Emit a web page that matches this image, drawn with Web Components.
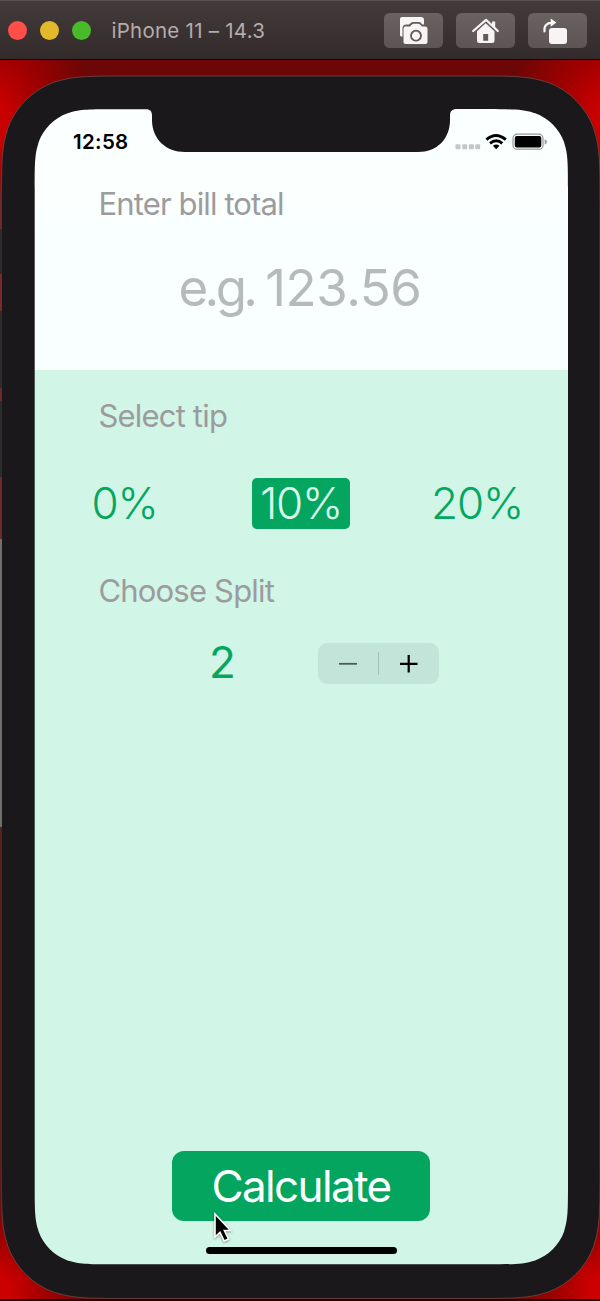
<!DOCTYPE html>
<html lang="en">
<head>
<meta charset="utf-8">
<title>Tip calculator</title>
<style>
  body { margin: 0; width: 600px; height: 1301px; overflow: hidden; font-family: Inter, "Liberation Sans", sans-serif; background: #6d0606; }
</style>
</head>
<body>
<simulator-window>
  <title-bar slot="bar" label="iPhone 11 – 14.3">
    <tool-button icon="camera"></tool-button>
    <tool-button icon="home"></tool-button>
    <tool-button icon="rotate"></tool-button>
  </title-bar>
  <phone-frame>
    <status-bar time="12:58"></status-bar>
    <bill-entry>
      <field-label style="letter-spacing:-.87px">Enter bill total</field-label>
      <span slot="value"><span style="letter-spacing:-3.600px">e.g. </span>123.56</span>
    </bill-entry>
    <tip-form>
      <field-label>Select tip</field-label>
      <tip-row>
        <tip-option style="width:75px">0%</tip-option>
        <tip-option style="width:98px" selected>10%</tip-option>
        <tip-option style="width:102px">20%</tip-option>
      </tip-row>
      <field-label>Choose Split</field-label>
      <split-stepper value="2"></split-stepper>
    </tip-form>
    <calc-button slot="footer">Calculate</calc-button>
  </phone-frame>
</simulator-window>
<script>
const define = (name, html, setup) => customElements.define(name, class extends HTMLElement {
  constructor() {
    super();
    this.attachShadow({ mode: "open" }).innerHTML = html;
  }
  connectedCallback() { if (setup) setup(this, this.shadowRoot); }
});

// Rounded rectangle with continuous-curvature corners.
function smoothRect(x, y, w, h, r, top) {
  const a = 1.52866 * r, b = 1.08849 * r, c = .86841 * r, m = .66993 * r, n = .06549 * r, d = .63149 * r, e = .07491 * r, f = .37282 * r, g = .16906 * r;
  const R = x + w, B = y + h;
  return `M${x + a} ${y}${top || ""}H${R - a}C${R - b} ${y} ${R - c} ${y} ${R - m} ${y + n}L${R - d} ${y + e}C${R - f} ${y + g} ${R - g} ${y + f} ${R - e} ${y + d}L${R - n} ${y + m}C${R} ${y + c} ${R} ${y + b} ${R} ${y + a}` +
    `V${B - a}C${R} ${B - b} ${R} ${B - c} ${R - n} ${B - m}L${R - e} ${B - d}C${R - g} ${B - f} ${R - f} ${B - g} ${R - d} ${B - e}L${R - m} ${B - n}C${R - c} ${B} ${R - b} ${B} ${R - a} ${B}` +
    `H${x + a}C${x + b} ${B} ${x + c} ${B} ${x + m} ${B - n}L${x + d} ${B - e}C${x + f} ${B - g} ${x + g} ${B - f} ${x + e} ${B - d}L${x + n} ${B - m}C${x} ${B - c} ${x} ${B - b} ${x} ${B - a}` +
    `V${y + a}C${x} ${y + b} ${x} ${y + c} ${x + n} ${y + m}L${x + e} ${y + d}C${x + g} ${y + f} ${x + f} ${y + g} ${x + d} ${y + e}L${x + m} ${y + n}C${x + c} ${y} ${x + b} ${y} ${x + a} ${y}Z`;
}

define("simulator-window", `
<style>
  :host { display: flex; flex-direction: column; width: 600px; height: 1301px; overflow: hidden; position: relative;
    background:
      linear-gradient(#000, #3a0000) 0 100%/100% 2px no-repeat,
      radial-gradient(100px 130px at -8px 120px, #c80000 15%, #a00000 50%, #6d060600 100%),
      radial-gradient(100px 130px at 608px 120px, #c80000 15%, #a00000 50%, #6d060600 100%),
      radial-gradient(95px 95px at -5px 1290px, #cc0000 15%, #a80000 45%, #6d060600 100%),
      radial-gradient(95px 95px at 605px 1290px, #cc0000 15%, #a80000 45%, #6d060600 100%),
      #6d0606; }
</style>
<slot name="bar"></slot><slot></slot>`);

define("title-bar", `
<style>
  :host { display: flex; align-items: center; box-sizing: border-box; height: 60px; flex: none; padding: 2px 13px 0 8px;
    background: linear-gradient(#433a3a, #332b2b); border-top: 1px solid #5a5252; border-bottom: 1px solid #120404; }
  i { width: 19.5px; height: 19.5px; border-radius: 50%; margin-right: 12.5px; position: relative; left: -.4px; top: -.5px; }
  b { font: 400 20.5px Inter, sans-serif; color: #b3acac; margin: -1px 0 0 7.500px; flex: 1; white-space: nowrap; letter-spacing: .25px; }
  div { display: flex; gap: 13px; }
</style>
<i style="background:#ff4f48"></i><i style="background:#e2b928"></i><i style="background:#48bb29"></i>
<b></b><div><slot></slot></div>`, (el, root) => root.querySelector("b").textContent = el.getAttribute("label"));

const icons = {
  camera: `<path d="M18 4h19a3 3 0 0 1 3 3v4.500h-1.500L37 10Q36.300 9 35 9h-6q-1.300 0-2 .7L25 11.500H22.500q-4 0-4 4v8h-1A1.500 1.500 0 0 1 16 22V6a2 2 0 0 1 2-2Z"/>
    <path fill-rule="evenodd" d="M23 13.500h3l2-2q.7-.8 1.800-.8h4.400q1.100 0 1.800.8l2 2h3a2.500 2.500 0 0 1 2.500 2.500V29a2 2 0 0 1-2 2h-20a2 2 0 0 1-2-2V16a2.500 2.500 0 0 1 3.500-2.500ZM32 16.800a5.900 5.900 0 1 0 .01 0ZM32 18.600a4.100 4.100 0 1 1-.01 0Z"/>`,
  home: `<path fill="none" stroke="#f8f4f5" stroke-width="2.200" stroke-linecap="round" stroke-linejoin="round" d="M17.200 18 30 6.800 41.800 18"/><path d="M36 8.500h3.200v7L36 12.500Z"/>
    <path fill-rule="evenodd" d="M21 18.200 29.700 10.300 38.500 18.200V27.500a2.500 2.500 0 0 1-2.500 2.500H23.500A2.500 2.500 0 0 1 21 27.500ZM27.200 21h5v6.800h-5Z"/>`,
  rotate: `<rect x="21" y="15" width="18" height="16" rx="3"/><path fill="none" stroke="#f8f4f5" stroke-width="2.200" stroke-linecap="round" d="M16.500 18.500C15.700 12.500 19 9.800 23.500 9.800"/><path d="M22.700 5.500 28.400 9.600l-5.700 4.200Z"/>`
};
define("tool-button", `
<style>
  :host { display: block; box-sizing: border-box; width: 59px; height: 35px; border-radius: 5.500px; background: linear-gradient(#6a6161, #5d5555); margin-top: -1px; }
  svg { display: block; fill: #f8f4f5; }
</style>
<svg width="59" height="35" viewBox="0 0 59 35"></svg>`, (el, root) => root.querySelector("svg").innerHTML = icons[el.getAttribute("icon")]);

define("phone-frame", `
<style>
  :host { display: block; position: relative; height: 1241px; width: 600px; }
  .shell { position: absolute; left: 0; top: 0; }
  .edge { position: absolute; left: 0; top: 110px; width: 1.500px; height: 1060px;
    background: linear-gradient(#7a100e00, #6b2b28 30px 59px, #2a2d2b 59px 104px, #7a2b28 104px 141px, #2a2d2b 141px 218px, #6b2b28 218px 231px, #2a2d2b 231px 307px, #6b2b28 307px 369px, #6f706c 369px 657px, #5c1f1d 657px 1000px, #7a100e00); }
  .screen { position: relative; box-sizing: border-box; margin-left: 34px; width: 535px; height: 1241px; padding-top: 49px; display: flex; flex-direction: column;
    background: linear-gradient(#fbffff 50px, #f8fffe 310px, #d1f5e7 310px); }
  .grow { flex: 1; }
  .bar { width: 191px; height: 7px; border-radius: 4px; background: #000; margin: 26.500px 0 47px 172px; flex: none; }
  .cursor { position: absolute; left: 212px; top: 1151px; filter: drop-shadow(0 1px 1px #0006); }
</style>
<svg class="shell" width="600" height="1241" viewBox="0 60 600 1241"><path fill="#1a181a" stroke="#6f4a4a" stroke-opacity=".8"/></svg>
<div class="edge"></div>
<div class="screen"><slot></slot><div class="grow"></div><slot name="footer"></slot><div class="bar"></div></div>
<svg class="cursor" width="24" height="34" viewBox="0 0 24 34"><path d="M3 3v23l5-4.600 4.200 8.600 4.300-2L12.400 19.500H18.500Z" fill="#000" stroke="#fff" stroke-width="1.600"/></svg>`,
(el, root) => {
  root.querySelector(".shell path").setAttribute("d", smoothRect(1.5, 76, 598.5, 1222.5, 83));
  const notch = "H111C116 49 118 51 118 56V60C118 79 132 92 151 92H384C403 92 416 79 416 60V56C416 51 418 49 423 49";
  root.querySelector(".screen").style.clipPath = `path("${smoothRect(.7, 49.3, 533.3, 1155, 52, notch)}")`;
});

define("status-bar", `
<style>
  :host { display: flex; align-items: center; height: 65px; box-sizing: border-box; padding: 0 22.500px 0 39px; justify-content: space-between; }
  b { font: 600 20.500px Inter, sans-serif; letter-spacing: .3px; color: #000; }
  svg { display: block; }
</style>
<b></b>
<svg width="92" height="20" viewBox="0 0 92 20">
  <g fill="#c3c7c7"><rect x=".5" y="12.300" width="5" height="5" rx="1"/><rect x="7.200" y="12.300" width="5" height="5" rx="1"/><rect x="13.900" y="12.300" width="5" height="5" rx="1"/><rect x="20.300" y="12.300" width="4.800" height="5" rx="1"/></g>
  <g fill="none" stroke="#000" stroke-width="2.900"><path d="M31.500 7.600Q41 -.8 50.800 7.600"/><path d="M35 11.400Q41.200 6 47.300 11.400"/></g>
  <path d="M37.900 13.800Q41.200 11.200 44.500 13.800L41.200 17.200Z"/>
  <rect x="58" y="2.200" width="30" height="15" rx="4" fill="none" stroke="#92999a" stroke-width="1.200"/>
  <rect x="59.800" y="4" width="26.500" height="11.400" rx="2"/><path fill="#92999a" d="M89.700 7.200q2.200.6 2.200 2.600t-2.200 2.600Z"/>
</svg>`, (el, root) => root.querySelector("b").textContent = el.getAttribute("time"));

define("field-label", `
<style>:host { display: block; font-size: 31px; line-height: 40px; font-weight: 400; color: #9c9b9d; white-space: nowrap; padding-left: 64.500px; letter-spacing: -.82px; }</style><slot></slot>`);

define("bill-entry", `
<style>
  :host { display: flex; flex-direction: column; height: 196px; box-sizing: border-box; padding-top: 10px; }
  .value { text-align: center; font-size: 51px; line-height: 60px; margin-top: 34px; color: #b6baba; letter-spacing: -.4px; padding-right: 3px; }
</style>
<slot></slot><div class="value"><slot name="value"></slot></div>`);

define("tip-form", `<style>:host { display: flex; flex-direction: column; padding-top: 26px; }</style><slot></slot>`);

define("tip-row", `<style>:host { display: flex; padding: 41.500px 0 42px 53px; } ::slotted([selected]) { margin: 0 76px 0 90px; }</style><slot></slot>`);

define("tip-option", `
<style>
  :host { display: block; height: 51.500px; line-height: 51.500px; text-align: center; font-size: 44px; font-weight: 350; color: #04a75f; border-radius: 5px; letter-spacing: -1.200px; }
  :host([selected]) { background: #03a55f; color: #d7f8ea; }
</style><slot></slot>`);

define("split-stepper", `
<style>
  :host { display: flex; align-items: center; height: 41px; padding: 31.800px 0 0 175px; }
  b { font-weight: 370; font-size: 44px; line-height: 40px; color: #04a75f; width: 109px; margin-top: -3px; }
  svg { display: block; }
</style>
<b></b>
<svg width="121" height="41" viewBox="0 0 121 41"><rect width="121" height="41" rx="9" fill="#c3e5d9"/>
  <path d="M21 20.800h18" stroke="#4b5e56" stroke-width="1.800"/><path d="M60.500 9v23" stroke="#a5c0b6"/><path d="M82 20.800h17.500M90.700 12v17.600" stroke="#000" stroke-width="2.200"/></svg>`,
(el, root) => root.querySelector("b").textContent = el.getAttribute("value"));

define("calc-button", `
<style>
  :host { display: block; width: 258px; height: 69.500px; margin-left: 138px; border-radius: 12px; background: #03a55f; color: #fbfffd; text-align: center; font-size: 44px; line-height: 70px; font-weight: 370; letter-spacing: -1.600px; }
</style><slot></slot>`);
</script>
</body>
</html>
